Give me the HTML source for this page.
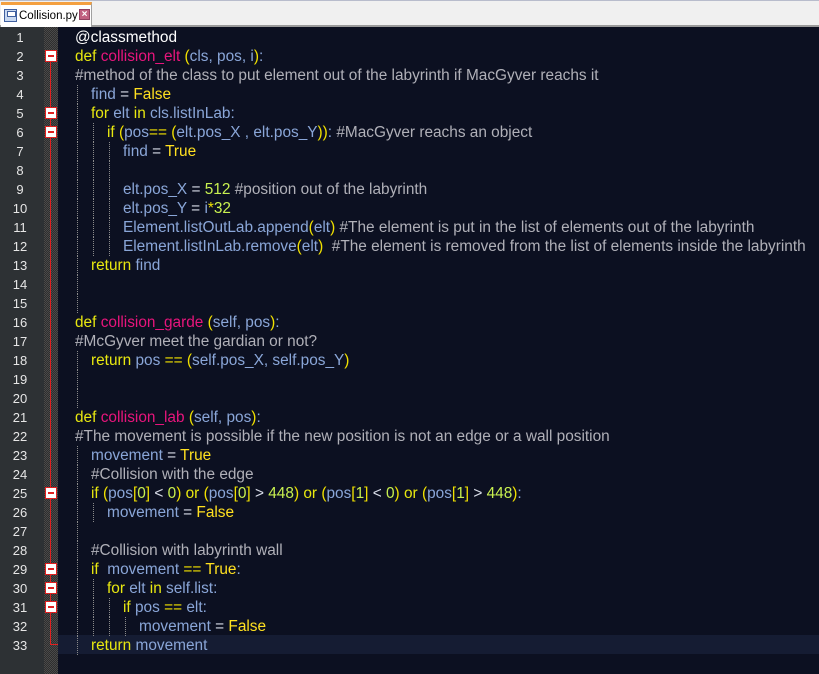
<!DOCTYPE html>
<html><head><meta charset="utf-8"><style>
*{margin:0;padding:0;box-sizing:border-box}
body{width:819px;height:674px;overflow:hidden;background:#0c1021;font-family:"Liberation Sans",Arial,sans-serif;position:relative}
#tabbar{position:absolute;left:0;top:0;width:819px;height:27px;background:#f0f0f0;border-top:1px solid #b8bccc;border-bottom:2px solid #9a9a9a}
#tab{position:absolute;left:1px;top:1px;width:91px;height:25px;background:#fff;border-top:3px solid #f4a040;border-right:1px solid #a0a0a0;font-size:11.5px;color:#000}
#tab .ic{position:absolute;left:3px;top:4px;width:13px;height:13px;border:1px solid #4060a0;background:#c8d8f0}
#tab .ic:after{content:"";position:absolute;left:2px;top:1px;width:7px;height:4px;background:#fff;border:1px solid #4060a0}
#tab .t{position:absolute;left:18px;top:5px}
#tab .x{position:absolute;left:78px;top:4px;width:11px;height:11px;background:#c06080;border:1px solid #904060;color:#fff;font-size:10px;line-height:9px;text-align:center;font-weight:bold}
#gut{position:absolute;left:0;top:27px;width:44px;height:647px;background:#2d3134}
#fold{position:absolute;left:44px;top:27px;width:14px;height:647px;background-color:#3a3a3a;background-image:repeating-conic-gradient(#4a4a4a 0 25%,#2e2e2e 0 50%);background-size:2px 2px}
#redline{position:absolute;left:50px;top:61px;width:1px;height:584px;background:#e02020}
#tick{position:absolute;left:50px;top:644px;width:8px;height:1px;background:#e02020}
.fb{position:absolute;left:45px;width:12px;height:12px;background:#fff;border:1px solid #e02020}
.fb:after{content:"";position:absolute;left:2px;top:4px;width:6px;height:2px;background:#e02020}
#cur{position:absolute;left:58px;top:635px;width:761px;height:19px;background:#151c33}
.ln{position:absolute;left:0;width:40px;text-align:center;color:#e6e6e6;font-size:13px;line-height:19px}
.l{position:absolute;left:75px;font-size:15.4px;line-height:19px;white-space:pre;color:#8aa6d8}
.g{position:absolute;width:0;height:19px;border-left:1px dotted #8a8a8a}
.k{color:#e8e810}.f{color:#e8157c}.c{color:#b0b0b8}.n{color:#c8f050}.b{color:#f0e000}.w{color:#ffffff}.o{color:#d8dce8}.y{color:#ffe020}
</style></head><body>
<div id="tabbar"><div id="tab"><span class="ic"></span><span class="t">Collision.py</span><span class="x">×</span></div></div>
<div id="gut"></div><div id="fold"></div><div id="cur"></div>
<div id="redline"></div><div id="tick"></div>
<div class="fb" style="top:50px"></div>
<div class="fb" style="top:107px"></div>
<div class="fb" style="top:126px"></div>
<div class="fb" style="top:487px"></div>
<div class="fb" style="top:563px"></div>
<div class="fb" style="top:582px"></div>
<div class="fb" style="top:601px"></div>
<div id="lines"></div>
<script>
(function(){
var L=[
[0,'<span class="w">@classmethod</span>'],
[0,'<span class="k">def</span> <span class="f">collision_elt</span> <span class="b">(</span>cls, pos, i<span class="b">)</span>:'],
[0,'<span class="c">#method of the class to put element out of the labyrinth if MacGyver reachs it</span>'],
[1,'find <span class="o">=</span> <span class="y">False</span>'],
[1,'<span class="k">for</span> elt <span class="k">in</span> cls.listInLab:'],
[2,'<span class="k">if</span> <span class="b">(</span>pos<span class="b">==</span> <span class="b">(</span>elt.pos_X , elt.pos_Y<span class="b">))</span>: <span class="c">#MacGyver reachs an object</span>'],
[3,'find <span class="o">=</span> <span class="y">True</span>'],
[3,''],
[3,'elt.pos_X <span class="o">=</span> <span class="n">512</span> <span class="c">#position out of the labyrinth</span>'],
[3,'elt.pos_Y <span class="o">=</span> i<span class="b">*</span><span class="n">32</span>'],
[3,'Element.listOutLab.append<span class="b">(</span>elt<span class="b">)</span> <span class="c">#The element is put in the list of elements out of the labyrinth</span>'],
[3,'Element.listInLab.remove<span class="b">(</span>elt<span class="b">)</span>  <span class="c">#The element is removed from the list of elements inside the labyrinth</span>'],
[1,'<span class="k">return</span> find'],
[1,''],[1,''],
[0,'<span class="k">def</span> <span class="f">collision_garde</span> <span class="b">(</span>self, pos<span class="b">)</span>:'],
[0,'<span class="c">#McGyver meet the gardian or not?</span>'],
[1,'<span class="k">return</span> pos <span class="b">==</span> <span class="b">(</span>self.pos_X, self.pos_Y<span class="b">)</span>'],
[1,''],[1,''],
[0,'<span class="k">def</span> <span class="f">collision_lab</span> <span class="b">(</span>self, pos<span class="b">)</span>:'],
[0,'<span class="c">#The movement is possible if the new position is not an edge or a wall position</span>'],
[1,'movement <span class="o">=</span> <span class="y">True</span>'],
[1,'<span class="c">#Collision with the edge</span>'],
[1,'<span class="k">if</span> <span class="b">(</span>pos<span class="b">[</span><span class="n">0</span><span class="b">]</span> <span class="o">&lt;</span> <span class="n">0</span><span class="b">)</span> <span class="k">or</span> <span class="b">(</span>pos<span class="b">[</span><span class="n">0</span><span class="b">]</span> <span class="o">&gt;</span> <span class="n">448</span><span class="b">)</span> <span class="k">or</span> <span class="b">(</span>pos<span class="b">[</span><span class="n">1</span><span class="b">]</span> <span class="o">&lt;</span> <span class="n">0</span><span class="b">)</span> <span class="k">or</span> <span class="b">(</span>pos<span class="b">[</span><span class="n">1</span><span class="b">]</span> <span class="o">&gt;</span> <span class="n">448</span><span class="b">)</span>:'],
[2,'movement <span class="o">=</span> <span class="y">False</span>'],
[1,''],
[1,'<span class="c">#Collision with labyrinth wall</span>'],
[1,'<span class="k">if</span>  movement <span class="b">==</span> <span class="y">True</span>:'],
[2,'<span class="k">for</span> elt <span class="k">in</span> self.list:'],
[3,'<span class="k">if</span> pos <span class="b">==</span> elt:'],
[4,'movement <span class="o">=</span> <span class="y">False</span>'],
[1,'<span class="k">return</span> movement']
];
var h='';
for(var i=0;i<L.length;i++){
 var ty=28+i*19,d=L[i][0];
 h+='<div class="ln" style="top:'+ty+'px">'+(i+1)+'</div>';
 for(var j=0;j<d;j++) h+='<div class="g" style="top:'+ty+'px;left:'+(77+16*j)+'px"></div>';
 h+='<div class="l" style="top:'+ty+'px;left:'+(75+16*d)+'px">'+L[i][1]+'</div>';
}
document.getElementById('lines').innerHTML=h;
})();
</script>
</body></html>
